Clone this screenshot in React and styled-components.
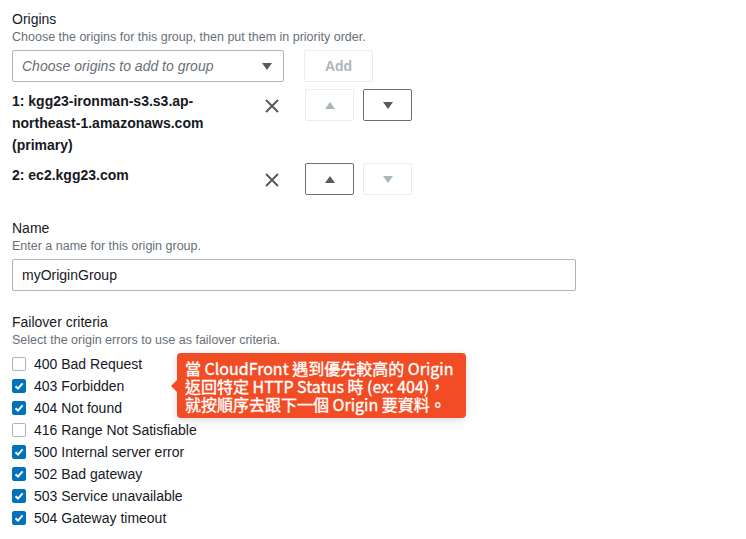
import React from "react";
import styled, { createGlobalStyle } from "styled-components";

const GlobalStyle = createGlobalStyle`
  body {
    margin: 0;
    background: #ffffff;
    font-family: "Liberation Sans", Arial, sans-serif;
    color: #16191f;
  }
`;

const Page = styled.div`
  padding: 9px 12px;
`;

const Field = styled.div`
  margin-top: ${(props) => props.gap || 0}px;
`;

const Label = styled.div`
  font-size: 14px;
  line-height: 20px;
`;

const Description = styled.div`
  font-size: 12.5px;
  line-height: 16px;
  color: #687078;
`;

const ControlRow = styled.div`
  display: flex;
  gap: 20px;
  margin-top: 5px;
`;

const Select = styled.div`
  width: 272px;
  height: 32px;
  box-sizing: border-box;
  border: 1px solid #aab7b8;
  border-radius: 2px;
  display: flex;
  align-items: center;
  justify-content: space-between;
  padding: 0 11px 0 9px;
  font-size: 14px;
  font-style: italic;
  color: #687078;
`;

const Caret = styled.span`
  width: 0;
  height: 0;
  border-left: 5px solid transparent;
  border-right: 5px solid transparent;
  border-top: 7px solid ${(props) => props.color || "#545b64"};
`;

const CaretUp = styled.span`
  width: 0;
  height: 0;
  border-left: 5px solid transparent;
  border-right: 5px solid transparent;
  border-bottom: 7px solid ${(props) => props.color || "#545b64"};
`;

const AddButton = styled.div`
  width: 69px;
  height: 32px;
  box-sizing: border-box;
  border: 1px solid #eaeded;
  border-radius: 2px;
  display: flex;
  align-items: center;
  justify-content: center;
  font-size: 14px;
  font-weight: bold;
  color: #aab7b8;
`;

const OriginList = styled.div`
  margin-top: 7px;
  display: flex;
  flex-direction: column;
  gap: 7px;
`;

const OriginRow = styled.div`
  display: flex;
  align-items: flex-start;
`;

const OriginName = styled.div`
  width: 240px;
  padding-top: 1px;
  font-size: 14px;
  line-height: 22px;
  font-weight: bold;
`;

const Block = styled.span`
  display: block;
`;

const Remove = styled.div`
  width: 40px;
  height: 33px;
  display: flex;
  align-items: center;
  justify-content: center;
`;

const MoveGroup = styled.div`
  display: flex;
  gap: 9px;
  margin-left: 13px;
`;

const MoveButton = styled.div`
  width: 49px;
  height: 32px;
  box-sizing: border-box;
  border: 1px solid ${(props) => (props.disabled ? "#eaeded" : "#687078")};
  border-radius: 2px;
  display: flex;
  align-items: center;
  justify-content: center;
`;

const TextInput = styled.div`
  margin-top: 5px;
  width: 564px;
  height: 32px;
  box-sizing: border-box;
  border: 1px solid #aab7b8;
  border-radius: 2px;
  display: flex;
  align-items: center;
  padding-left: 9px;
  font-size: 14px;
`;

const CheckList = styled.div`
  position: relative;
  margin-top: 5px;
`;

const CheckRow = styled.div`
  display: flex;
  align-items: center;
  height: 22px;
  font-size: 14px;
`;

const Box = styled.span`
  width: 14px;
  height: 14px;
  box-sizing: border-box;
  border-radius: 2px;
  margin-right: 8px;
  display: flex;
  align-items: center;
  justify-content: center;
  background: ${(props) => (props.checked ? "#0073bb" : "#ffffff")};
  border: 1px solid ${(props) => (props.checked ? "#0073bb" : "#aab7b8")};
`;

const Callout = styled.div`
  position: absolute;
  top: 0;
  left: 165px;
  background: #f24c24;
  color: #ffffff;
  border-radius: 4px;
  padding: 6px 12px 5px 8px;
  font-family: "Noto Sans CJK TC", sans-serif;
  font-size: 16px;
  line-height: 18px;
  font-weight: 400;
  -webkit-text-stroke: 0.35px #ffffff;
  white-space: nowrap;
  box-shadow: 0 2px 8px rgba(0, 0, 0, 0.15);

  &::before {
    content: "";
    position: absolute;
    left: -6px;
    top: 27px;
    border-top: 6px solid transparent;
    border-bottom: 6px solid transparent;
    border-right: 6px solid #f24c24;
  }
`;

const CalloutLine = styled.div`
  height: 18px;
`;

const CloseIcon = () => (
  <svg width="14" height="14" viewBox="0 0 14 14">
    <path d="M1 1 L13 13 M13 1 L1 13" stroke="#545b64" strokeWidth="2" />
  </svg>
);

const Check = () => (
  <svg width="10" height="10" viewBox="0 0 10 10">
    <path d="M1.5 5.2 L4 7.6 L8.6 2.4" stroke="#ffffff" strokeWidth="2" fill="none" />
  </svg>
);

const criteria = [
  { code: "400 Bad Request", checked: false },
  { code: "403 Forbidden", checked: true },
  { code: "404 Not found", checked: true },
  { code: "416 Range Not Satisfiable", checked: false },
  { code: "500 Internal server error", checked: true },
  { code: "502 Bad gateway", checked: true },
  { code: "503 Service unavailable", checked: true },
  { code: "504 Gateway timeout", checked: true },
];

const calloutLines = [
  "當 CloudFront 遇到優先較高的 Origin",
  "返回特定 HTTP Status 時 (ex: 404)，",
  "就按順序去跟下一個 Origin 要資料。",
];

const App = () => {
  return (
    <>
      <GlobalStyle />
      <Page>
        <Field>
          <Label>Origins</Label>
          <Description>Choose the origins for this group, then put them in priority order.</Description>
          <ControlRow>
            <Select>
              Choose origins to add to group
              <Caret />
            </Select>
            <AddButton>Add</AddButton>
          </ControlRow>
          <OriginList>
            <OriginRow>
              <OriginName>
                1: kgg23-ironman-s3.s3.ap-northeast-1.amazonaws.com
                <Block>(primary)</Block>
              </OriginName>
              <Remove>
                <CloseIcon />
              </Remove>
              <MoveGroup>
                <MoveButton disabled>
                  <CaretUp color="#aab7b8" />
                </MoveButton>
                <MoveButton>
                  <Caret />
                </MoveButton>
              </MoveGroup>
            </OriginRow>
            <OriginRow>
              <OriginName>2: ec2.kgg23.com</OriginName>
              <Remove>
                <CloseIcon />
              </Remove>
              <MoveGroup>
                <MoveButton>
                  <CaretUp />
                </MoveButton>
                <MoveButton disabled>
                  <Caret color="#aab7b8" />
                </MoveButton>
              </MoveGroup>
            </OriginRow>
          </OriginList>
        </Field>

        <Field gap={22}>
          <Label>Name</Label>
          <Description>Enter a name for this origin group.</Description>
          <TextInput>myOriginGroup</TextInput>
        </Field>

        <Field gap={21}>
          <Label>Failover criteria</Label>
          <Description>Select the origin errors to use as failover criteria.</Description>
          <CheckList>
            {criteria.map((item) => (
              <CheckRow key={item.code}>
                <Box checked={item.checked}>{item.checked && <Check />}</Box>
                {item.code}
              </CheckRow>
            ))}
            <Callout>
              {calloutLines.map((line) => (
                <CalloutLine key={line}>{line}</CalloutLine>
              ))}
            </Callout>
          </CheckList>
        </Field>
      </Page>
    </>
  );
};

export default App;
